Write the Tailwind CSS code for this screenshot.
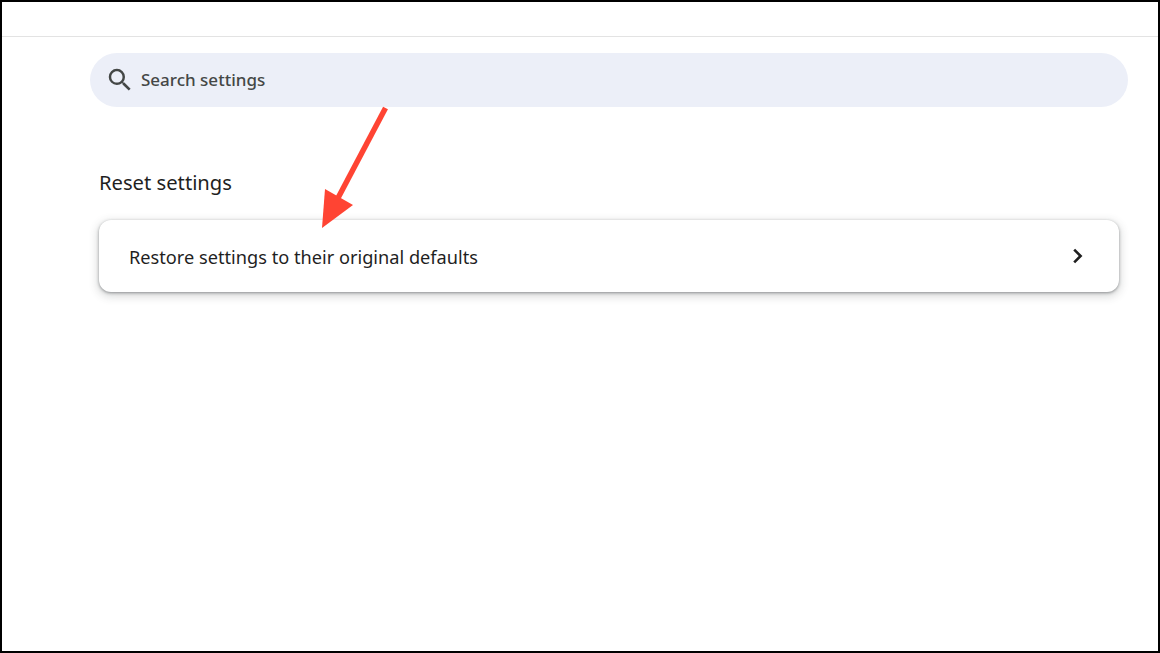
<!DOCTYPE html>
<html lang="en">
<head>
<meta charset="utf-8"/>
<title>Reset settings</title>
<script src="https://cdn.jsdelivr.net/npm/@tailwindcss/browser@4"></script>
</head>
<body class="bg-white">
<div class="relative w-[1160px] h-[653px] overflow-hidden bg-white border-t-2 border-l-2 border-r-2 border-b-2 border-black font-['Noto_Sans',sans-serif]">
  <div class="h-[34px] border-b border-[#e3e3e3] box-content"></div>
  <div class="ml-[88px] mt-[16px] w-[1038px] h-[54px] rounded-[27px] bg-[#eceff8] flex items-center pl-[15px]">
    <svg class="w-[30px] h-[30px] text-[#444746]" viewBox="0 0 24 24" fill="currentColor">
      <path d="M15.5 14h-.79l-.28-.27A6.47 6.47 0 0 0 16 9.5 6.5 6.5 0 1 0 9.5 16c1.61 0 3.09-.59 4.23-1.57l.27.28v.79l5 4.99L20.49 19l-4.99-5zm-6 0C7.01 14 5 11.99 5 9.5S7.01 5 9.5 5 14 7.01 14 9.5 11.99 14 9.5 14z"/>
    </svg>
    <span class="ml-[6px] text-[17px] font-medium text-[#444746]">Search settings</span>
  </div>
  <h2 class="ml-[97px] mt-[60px] h-[30px] leading-[30px] text-[20.2px] font-normal text-[#1f1f1f]">Reset settings</h2>
  <div class="ml-[97px] mt-[23px] w-[1020px] h-[72px] rounded-[12px] bg-white shadow-[0_1px_3px_rgba(60,64,67,0.5),0_3px_8px_2px_rgba(60,64,67,0.18)] flex items-center justify-between pl-[30px] pr-[35px]">
    <span class="pt-1 text-[18.2px] text-[#1f1f1f]">Restore settings to their original defaults</span>
    <svg class="w-[12px] h-[16px] text-[#1f1f1f]" viewBox="0 0 12 16" fill="none" stroke="currentColor" stroke-width="2.6">
      <path d="M2.2 1.6l6.4 6.4-6.4 6.4"/>
    </svg>
  </div>
  <svg class="absolute left-[-2px] top-[-2px] w-[1160px] h-[653px] pointer-events-none" viewBox="0 0 1160 653">
    <line x1="385.5" y1="108" x2="338" y2="198" stroke="#ff4433" stroke-width="5.5"/>
    <polygon points="322,228 325,189 353,205" fill="#ff4433"/>
  </svg>
</div>
</body>
</html>
